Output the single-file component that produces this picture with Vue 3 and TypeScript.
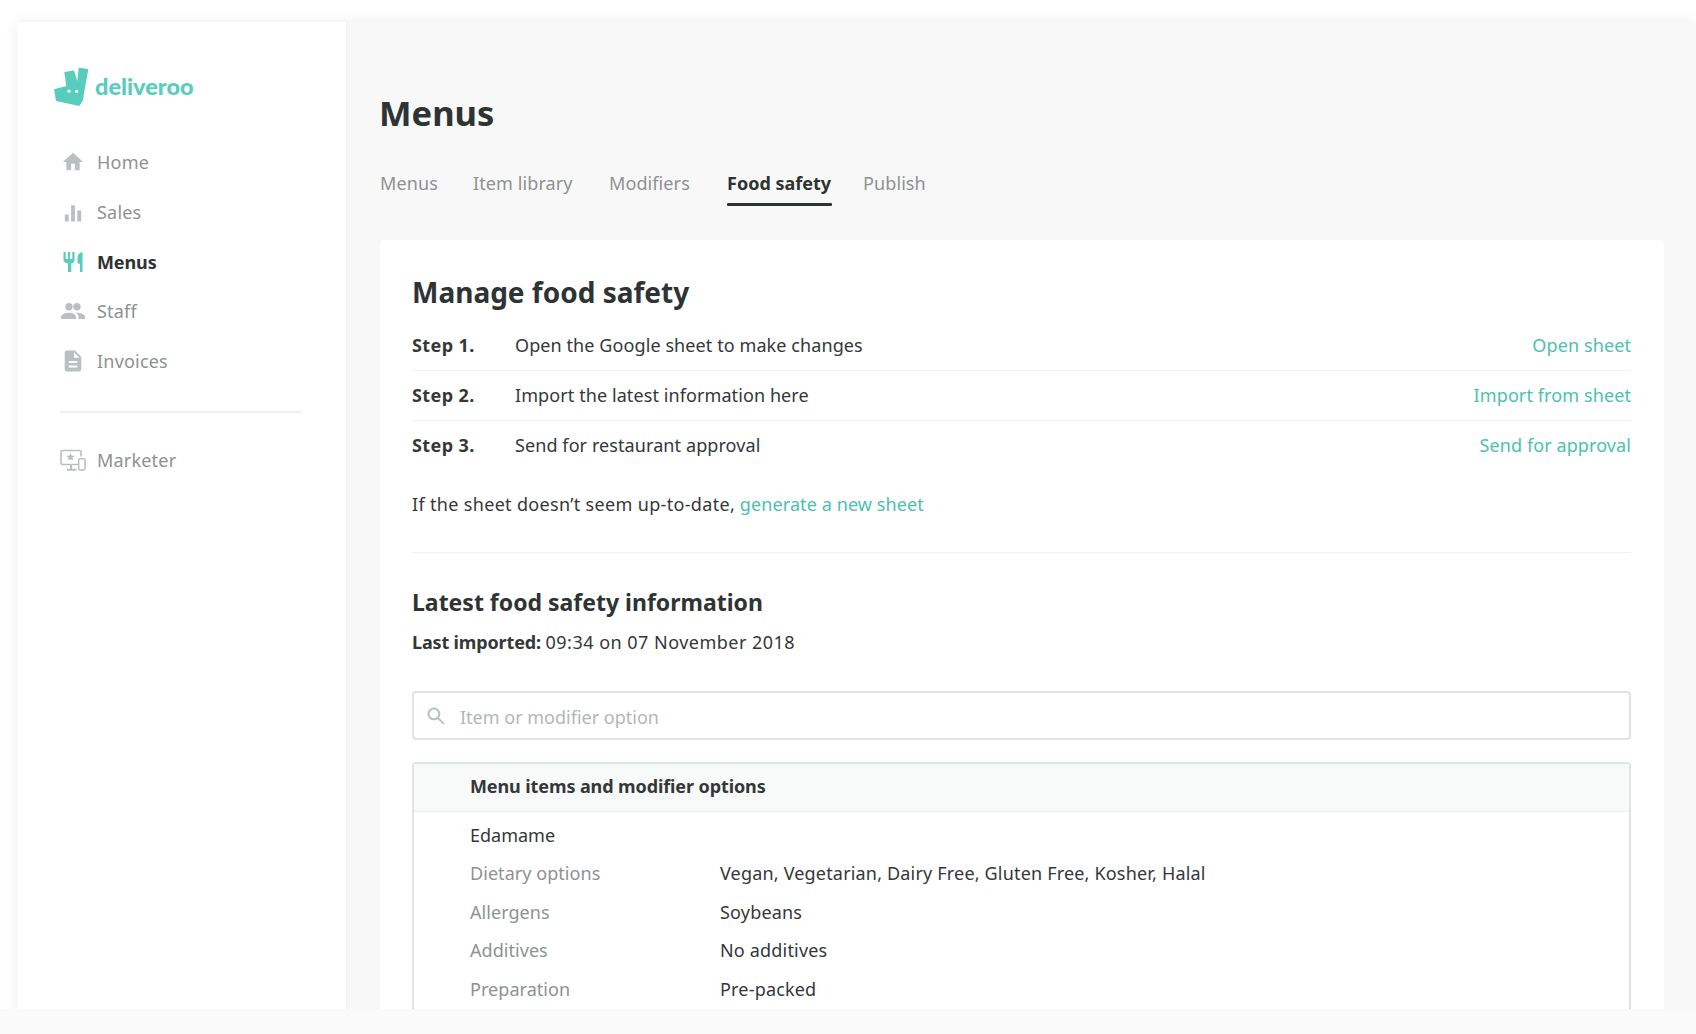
<script setup lang="ts">
const tabs = [
  { label: 'Menus', active: false },
  { label: 'Item library', active: false },
  { label: 'Modifiers', active: false },
  { label: 'Food safety', active: true },
  { label: 'Publish', active: false },
]
const steps = [
  { n: 'Step 1.', text: 'Open the Google sheet to make changes', link: 'Open sheet' },
  { n: 'Step 2.', text: 'Import the latest information here', link: 'Import from sheet' },
  { n: 'Step 3.', text: 'Send for restaurant approval', link: 'Send for approval' },
]
const details = [
  { k: 'Dietary options', v: 'Vegan, Vegetarian, Dairy Free, Gluten Free, Kosher, Halal' },
  { k: 'Allergens', v: 'Soybeans' },
  { k: 'Additives', v: 'No additives' },
  { k: 'Preparation', v: 'Pre-packed' },
]
</script>

<template>
  <div class="shot">
    <div class="frame">
      <aside class="sidebar">
        <div class="logo">
          <svg class="logo-mark" width="35" height="40" viewBox="0 0 35 40">
            <path d="M10.300 5 20 3.400 23.300 14 24.700.700 34.300 2 28.700 34 25.300 39 2 34 0 22.300 12.300 19Z" fill="#58cdbd" />
            <circle cx="15" cy="24.200" r="1.600" fill="#fff" />
            <circle cx="22.700" cy="24.400" r="1.600" fill="#fff" />
          </svg>
          <span class="logo-text">deliveroo</span>
        </div>
        <nav class="nav">
          <a class="nav-item">
            <svg class="ico" viewBox="-1 -1 26 26"><path d="M10 21v-7h4v7h5.200v-9H23L12 2 1 12h3.800v9z" /></svg>
            Home
          </a>
          <a class="nav-item short">
            <svg class="ico" viewBox="-.5 -1.500 25 25"><path d="M3.500 13.500h4v7.500h-4zM10 4h4v17h-4zM16.500 9.500h4V21h-4z" /></svg>
            Sales
          </a>
          <a class="nav-item active">
            <svg class="ico teal" viewBox="0 0 24 24"><path d="M2.500 2h2.200v7h2.300V2h2v7h2.300V2h2.200v8c0 1.700-1 3-3.200 3.400V22H7v-8.600C4 13 2.500 11.700 2.500 10zM21.500 2v20H19v-8l-2.500-1V8c0-3 1.800-5.500 5-6z" /></svg>
            Menus
          </a>
          <a class="nav-item">
            <svg class="ico" viewBox="0 0 24 24"><path d="M16 11.500a3.700 3.700 0 1 0 0-7.400 3.700 3.700 0 0 0 0 7.400zm-8 0a3.700 3.700 0 1 0 0-7.400 3.700 3.700 0 0 0 0 7.400zm0 2.200c-3 0-8 1.400-8 4.200V20h15v-2.100c0-2.800-4-4.200-7-4.200zm8 0c-.4 0-.8 0-1.300.1 1.500 1 2.800 2.400 2.800 4.100V20H24v-2.100c0-2.800-5-4.200-8-4.200z" /></svg>
            Staff
          </a>
          <a class="nav-item">
            <svg class="ico" viewBox="0 0 24 24"><path d="M14 1.500H6c-1.300 0-2.300 1-2.300 2.200L3.700 20.300c0 1.200 1 2.200 2.300 2.200h12c1.300 0 2.300-1 2.300-2.200V8zm2.300 17H7.700v-2h8.600zm0-4.500H7.700v-2h8.600zM13 8.800V3.300l5.500 5.500z" /></svg>
            Invoices
          </a>
        </nav>
        <div class="nav-sep"></div>
        <a class="nav-item">
          <svg class="ico wide" viewBox="0 0 26 24">
            <path class="line" d="M18 16.500H2.500A1.500 1.500 0 0 1 1 15V4a1.500 1.500 0 0 1 1.500-1.500h17A1.500 1.500 0 0 1 21 4v4.500" stroke-width="1.600" />
            <path class="line" d="M7 21.800h9.500M11 17v4" stroke-width="2" />
            <path d="m10.500 5 1.200 2.600 2.800.3-2 1.900.5 2.800-2.500-1.400-2.500 1.400.5-2.800-2-1.900 2.800-.3z" />
            <rect class="line" x="18.700" y="10.700" width="6.300" height="11.300" rx="1.300" stroke-width="1.500" />
          </svg>
          Marketer
        </a>
      </aside>

      <main class="main">
        <h1 class="title">Menus</h1>
        <div class="tabs">
          <a v-for="t in tabs" :key="t.label" class="tab" :class="{ on: t.active }">{{ t.label }}</a>
        </div>

        <section class="card">
          <h2 class="card-title">Manage food safety</h2>
          <div v-for="(s, i) in steps" :key="s.n" class="step" :class="{ ruled: i < steps.length - 1 }">
            <b class="step-n">{{ s.n }}</b>
            <span class="step-text">{{ s.text }}</span>
            <a class="link">{{ s.link }}</a>
          </div>
          <p class="note"><span class="note-lead">If the sheet doesn’t seem up-to-date,</span> <a class="link">generate a new sheet</a></p>
          <div class="card-sep"></div>
          <h3 class="sub">Latest food safety information</h3>
          <p class="imported"><b>Last imported:</b> <span class="stamp">09:34 on 07 November 2018</span></p>
          <div class="search">
            <svg class="search-ico" viewBox="0 0 24 24" fill="none" stroke="#b9c1c0" stroke-width="2.400">
              <circle cx="9.500" cy="9.500" r="6.500" />
              <path d="m14.500 14.500 7 7" />
            </svg>
            <span>Item or modifier option</span>
          </div>
          <div class="table">
            <div class="thead">Menu items and modifier options</div>
            <div class="tname">Edamame</div>
            <div v-for="d in details" :key="d.k" class="trow">
              <span class="tk">{{ d.k }}</span>
              <span class="tv">{{ d.v }}</span>
            </div>
          </div>
        </section>
      </main>
    </div>
  </div>
</template>

<style>
html, body { background: #fafafa; }
</style>

<style scoped>
.shot {
  height: 1009px;
  overflow: hidden;
  background: #fff;
  padding: 22px 0 0 17px;
  box-sizing: border-box;
  font-family: "Noto Sans", "Liberation Sans", sans-serif;
  font-size: 18px;
  color: #333838;
}
.frame {
  display: flex;
  height: 1040px;
  box-shadow: 0 0 14px rgba(0, 0, 0, .07);
}
.sidebar {
  width: 329px;
  flex: none;
  box-sizing: border-box;
  background: #fff;
  padding: 45px 44px 0 43px;
  box-shadow: 1px 0 3px rgba(0, 0, 0, .04);
  position: relative;
}
.logo { display: flex; align-items: center; margin: 0 0 0 -6px; height: 40px; }
.logo-mark { flex: none; }
.logo-text {
  margin: -2px 0 0 6px;
  font-family: Lato, sans-serif;
  font-weight: 900;
  font-size: 23.500px;
  color: #58cdbd;
}
.nav { margin-top: 30px; }
.nav-item {
  display: flex;
  align-items: center;
  height: 50px;
  gap: 12px;
  color: #8d9292;
  font-size: 18px;
  letter-spacing: .2px;
  padding-left: 1px;
}
.nav-item:first-child { height: 50px; }
.nav-item.short { height: 50px; }
.nav-item.active { color: #2e3333; font-weight: 700; letter-spacing: -.1px; height: 49px; }
.ico { width: 24px; height: 24px; flex: none; fill: #b9c1c0; }
.ico.teal { fill: #58cdbd; }
.ico.wide { width: 26px; margin-left: -1px; margin-right: -1px; }
.line { fill: none; stroke: #b9c1c0; }
.nav-sep { height: 2px; background: #eef1f1; margin: 25px 0 22px; }
.main {
  flex: 1;
  min-width: 0;
  background: #f8f8f8;
  padding: 66px 32px 0 33px;
}
.title {
  margin: 0;
  font-size: 34.500px;
  line-height: 50px;
  font-weight: 700;
  color: #2e3333;
}
.tabs { display: flex; margin: 31px 0 0 1px; }
.tab {
  height: 37px;
  line-height: 28px;
  color: #8d9292;
  font-size: 18px;
  letter-spacing: .1px;
  white-space: nowrap;
  box-sizing: border-box;
}
.tab:nth-child(1) { width: 93px; }
.tab:nth-child(2) { width: 136px; }
.tab:nth-child(3) { width: 118px; }
.tab:nth-child(4) { width: 136px; }
.tab.on {
  color: #2e3333;
  font-weight: 700;
  letter-spacing: 0;
  position: relative;
}
.tab.on::after {
  content: "";
  position: absolute;
  left: 0;
  bottom: 0;
  width: 105px;
  height: 3px;
  background: #2e3333;
  border-radius: 1px;
}
.card {
  margin: 34px 0 0 1px;
  background: #fff;
  border-radius: 4px;
  padding: 32px 33px 0 32px;
  height: 900px;
}
.card-title {
  margin: 0 0 9px;
  font-size: 28px;
  line-height: 40px;
  font-weight: 700;
  color: #2e3333;
}
.step {
  display: flex;
  align-items: center;
  height: 50px;
  box-sizing: border-box;
  border-bottom: 1px solid transparent;
  padding-bottom: 1px;
}
.step.ruled { border-bottom-color: #f0f2f2; }
.step-n { width: 103px; flex: none; letter-spacing: .4px; }
.step-text { flex: 1; letter-spacing: .09px; }
.link { color: #4dbfb0; letter-spacing: .1px; }
.note { margin: 19px 0 0; line-height: 28px; }
.note-lead { letter-spacing: .33px; }
.card-sep { height: 1px; background: #eef1f1; margin-top: 34px; }
.sub {
  margin: 31px 0 0;
  font-size: 23px;
  line-height: 36px;
  font-weight: 700;
  color: #2e3333;
}
.imported { margin: 8px 0 0; line-height: 28px; }
.imported b { letter-spacing: -.15px; }
.stamp { letter-spacing: .48px; }
.search {
  margin-top: 35px;
  height: 49px;
  box-sizing: border-box;
  border: 2px solid #dfe3e3;
  border-radius: 4px;
  display: flex;
  align-items: center;
  padding-left: 12px;
  color: #b2b7b7;
}
.search span { position: relative; top: 1px; }
.search-ico { width: 20px; height: 20px; margin-right: 14px; flex: none; }
.table {
  margin-top: 22px;
  border: 2px solid #dfe3e3;
  border-bottom: 0;
  border-radius: 4px 4px 0 0;
  padding-bottom: 40px;
}
.thead {
  height: 48px;
  box-sizing: border-box;
  background: #f8f9f9;
  border-bottom: 1px solid #eef1f1;
  padding-left: 56px;
  line-height: 44px;
  font-weight: 700;
  letter-spacing: -.1px;
}
.tname, .trow { height: 38.400px; line-height: 38.400px; padding-left: 56px; }
.tname { margin-top: 4px; }
.trow { display: flex; }
.tk { width: 250px; flex: none; color: #8d9292; letter-spacing: .05px; }
.tv { letter-spacing: .18px; }
</style>
